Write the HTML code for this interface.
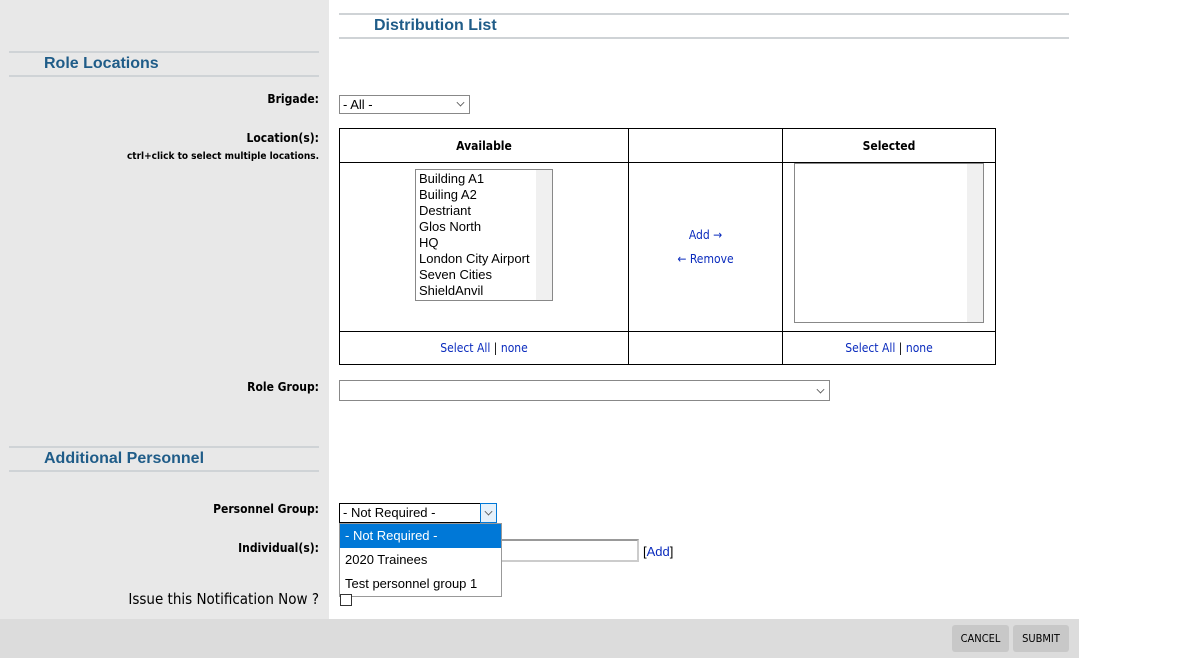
<!DOCTYPE html>
<html><head><meta charset="utf-8"><style>
*{box-sizing:border-box;margin:0;padding:0}
body{width:1199px;height:669px;background:#fff;position:relative;overflow:hidden;font-family:"DejaVu Sans Condensed","Liberation Sans",sans-serif;font-size:12px;color:#000}
.a{position:absolute}
.lbl{position:absolute;right:880px;font-weight:bold;font-size:12px;text-align:right;white-space:nowrap}
.h{position:absolute;border-top:2px solid #cfd3d6;border-bottom:2px solid #cfd3d6;color:#1f5c88;font-family:"Liberation Sans",sans-serif;font-weight:bold;font-size:16px}
.lk{color:#0a2bbd;font-size:12px}
.sel{position:absolute;border:1px solid #888;background:#fff;font-family:"Liberation Sans",sans-serif;font-size:13px;padding-left:3px;line-height:17px}
.arr{position:absolute;right:5px;top:3px;width:7px;height:7px;border-right:1px solid #555;border-bottom:1px solid #555;transform:rotate(45deg) scale(.8)}
td{border:1px solid #000;text-align:center}
</style></head><body>
<div class="a" style="left:0;top:0;width:329px;height:619px;background:#e8e8e8"></div>
<div class="h" style="left:339px;top:13px;width:730px;height:26px;padding-left:35px;line-height:22px">Distribution List</div>
<div class="h" style="left:9px;top:51px;width:310px;height:26px;padding-left:35px;line-height:22px">Role Locations</div>
<div class="lbl" style="top:92px">Brigade:</div>
<div class="sel" style="left:339px;top:95px;width:131px;height:19px">- All -<span class="arr"></span></div>
<div class="lbl" style="top:131px">Location(s):</div>
<div class="lbl" style="top:151px;font-size:10px">ctrl+click to select multiple locations.</div>
<table class="a" style="left:339px;top:128px;width:657px;height:237px;border-collapse:collapse">
<tr style="height:34px"><td style="width:289px;font-weight:bold">Available</td><td style="width:154px"></td><td style="font-weight:bold">Selected</td></tr>
<tr style="height:169px"><td></td><td><div class="lk">Add →</div><div class="lk" style="margin-top:10px">← Remove</div></td><td></td></tr>
<tr><td><span class="lk">Select All</span> | <span class="lk">none</span></td><td></td><td><span class="lk">Select All</span> | <span class="lk">none</span></td></tr>
</table>
<div class="a" style="left:415px;top:169px;width:138px;height:132px;border:1px solid #888;background:#fff;font-family:'Liberation Sans',sans-serif;font-size:13px;line-height:16px;padding:1px 3px">
Building A1<br>Builing A2<br>Destriant<br>Glos North<br>HQ<br>London City Airport<br>Seven Cities<br>ShieldAnvil
<div class="a" style="right:0;top:0;width:16px;height:130px;background:#f0f0f0"></div></div>
<div class="a" style="left:794px;top:163px;width:190px;height:160px;border:1px solid #888;background:#fff"><div class="a" style="right:0;top:0;width:16px;height:158px;background:#f0f0f0"></div></div>
<div class="lbl" style="top:380px">Role Group:</div>
<div class="sel" style="left:339px;top:380px;width:491px;height:21px"><span class="arr" style="top:5px"></span></div>
<div class="h" style="left:9px;top:446px;width:310px;height:26px;padding-left:35px;line-height:22px">Additional Personnel</div>
<div class="lbl" style="top:502px">Personnel Group:</div>
<div class="sel" style="left:339px;top:503px;width:158px;height:20px;border-color:#000">- Not Required -</div>
<div class="a" style="left:480px;top:503px;width:17px;height:20px;border:1px solid #0078d7;background:#e5f1fb"><span class="arr" style="right:4px;top:4px"></span></div>
<div class="lbl" style="top:541px">Individual(s):</div>
<div class="a" style="left:497px;top:539px;width:142px;height:23px;border:2px solid #ccc;border-top-color:#999"></div>
<div class="a" style="left:643px;top:544px;font-family:'Liberation Sans',sans-serif;font-size:13px">[<span style="color:#0a2bbd">Add</span>]</div>
<div class="a" style="left:339px;top:523px;width:163px;height:74px;border:1px solid #999;background:#fff;font-family:'Liberation Sans',sans-serif;font-size:13px">
<div style="background:#0078d7;color:#fff;height:24px;line-height:24px;padding-left:5px">- Not Required -</div>
<div style="height:24px;line-height:24px;padding-left:5px">2020 Trainees</div>
<div style="height:24px;line-height:24px;padding-left:5px">Test personnel group 1</div></div>
<div class="lbl" style="top:590px;font-weight:normal;font-size:15px">Issue this Notification Now ?</div>
<div class="a" style="left:340px;top:594px;width:12px;height:12px;border:1px solid #333;background:#fff"></div>
<div class="a" style="left:0;top:619px;width:1079px;height:39px;background:#dcdcdc"></div>
<div class="a" style="left:952px;top:625px;width:57px;height:27px;background:#c8c8c8;border-radius:3px;font-size:11px;line-height:27px;text-align:center">CANCEL</div>
<div class="a" style="left:1013px;top:625px;width:56px;height:27px;background:#c8c8c8;border-radius:3px;font-size:11px;line-height:27px;text-align:center">SUBMIT</div>
</body></html>
